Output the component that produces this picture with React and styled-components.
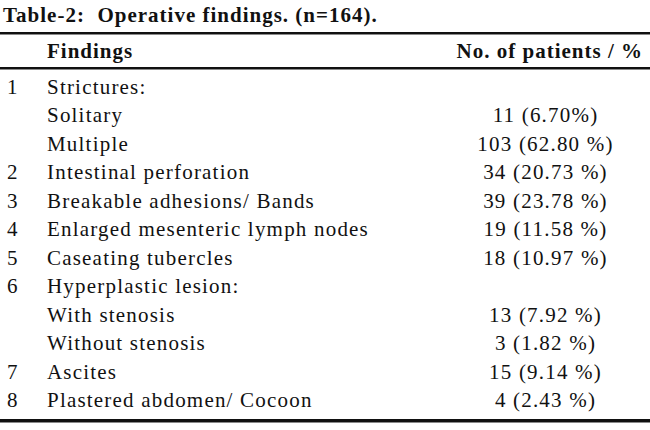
import React from "react";
import styled, { createGlobalStyle } from "styled-components";

const rows = [
  { no: "1", label: "Strictures:", value: "" },
  { no: "", label: "Solitary", value: "11 (6.70%)" },
  { no: "", label: "Multiple", value: "103 (62.80 %)" },
  { no: "2", label: "Intestinal perforation", value: "34 (20.73 %)" },
  { no: "3", label: "Breakable adhesions/ Bands", value: "39 (23.78 %)" },
  { no: "4", label: "Enlarged mesenteric lymph nodes", value: "19 (11.58 %)" },
  { no: "5", label: "Caseating tubercles", value: "18 (10.97 %)" },
  { no: "6", label: "Hyperplastic lesion:", value: "" },
  { no: "", label: "With stenosis", value: "13 (7.92 %)" },
  { no: "", label: "Without stenosis", value: "3 (1.82 %)" },
  { no: "7", label: "Ascites", value: "15 (9.14 %)" },
  { no: "8", label: "Plastered abdomen/ Cocoon", value: "4 (2.43 %)" },
];

const App = () => {
  return (
    <>
      <GlobalStyle />
      <Page>
        <Caption>Table-2:&nbsp; Operative findings. (n=164).</Caption>
        <Rule />
        <HeadRow>
          <span />
          <HeadCell>Findings</HeadCell>
          <HeadCell $right>No. of patients / %</HeadCell>
        </HeadRow>
        <Rule />
        <Body>
          {rows.map((row, i) => (
            <Row key={i}>
              <NoCell>{row.no}</NoCell>
              <LabelCell>{row.label}</LabelCell>
              <ValueCell>{row.value}</ValueCell>
            </Row>
          ))}
        </Body>
        <Rule $heavy />
      </Page>
    </>
  );
};

const GlobalStyle = createGlobalStyle`
  html, body {
    margin: 0;
    padding: 0;
    background: #fff;
  }
`;

const Page = styled.div`
  width: 650px;
  height: 430px;
  overflow: hidden;
  background: #fff;
  color: #111;
  font-family: "Liberation Serif", "Times New Roman", serif;
`;

const Caption = styled.div`
  height: 32px;
  line-height: 30px;
  padding-left: 3px;
  font-size: 21px;
  font-weight: bold;
  letter-spacing: 1px;
  white-space: nowrap;
`;

const Rule = styled.div`
  height: ${(p) => (p.$heavy ? "3px" : "2px")};
  background: #111;
  border-bottom: 1px solid #8a8a8a;
`;

const grid = `
  display: grid;
  grid-template-columns: 47px 1fr 203px;
  align-items: center;
`;

const HeadRow = styled.div`
  ${grid}
  height: 32px;
`;

const HeadCell = styled.div`
  font-size: 21px;
  font-weight: bold;
  letter-spacing: 1px;
  white-space: nowrap;
  text-align: ${(p) => (p.$right ? "right" : "left")};
  padding-right: ${(p) => (p.$right ? "7px" : "0")};
`;

const Body = styled.div`
  padding: 3px 0 4px;
`;

const Row = styled.div`
  ${grid}
  height: 28.5px;
  font-size: 21px;
  letter-spacing: 1.2px;
  white-space: nowrap;
`;

const NoCell = styled.div`
  padding-left: 7px;
`;

const LabelCell = styled.div``;

const ValueCell = styled.div`
  text-align: center;
  padding-right: 6px;
`;

export default App;
